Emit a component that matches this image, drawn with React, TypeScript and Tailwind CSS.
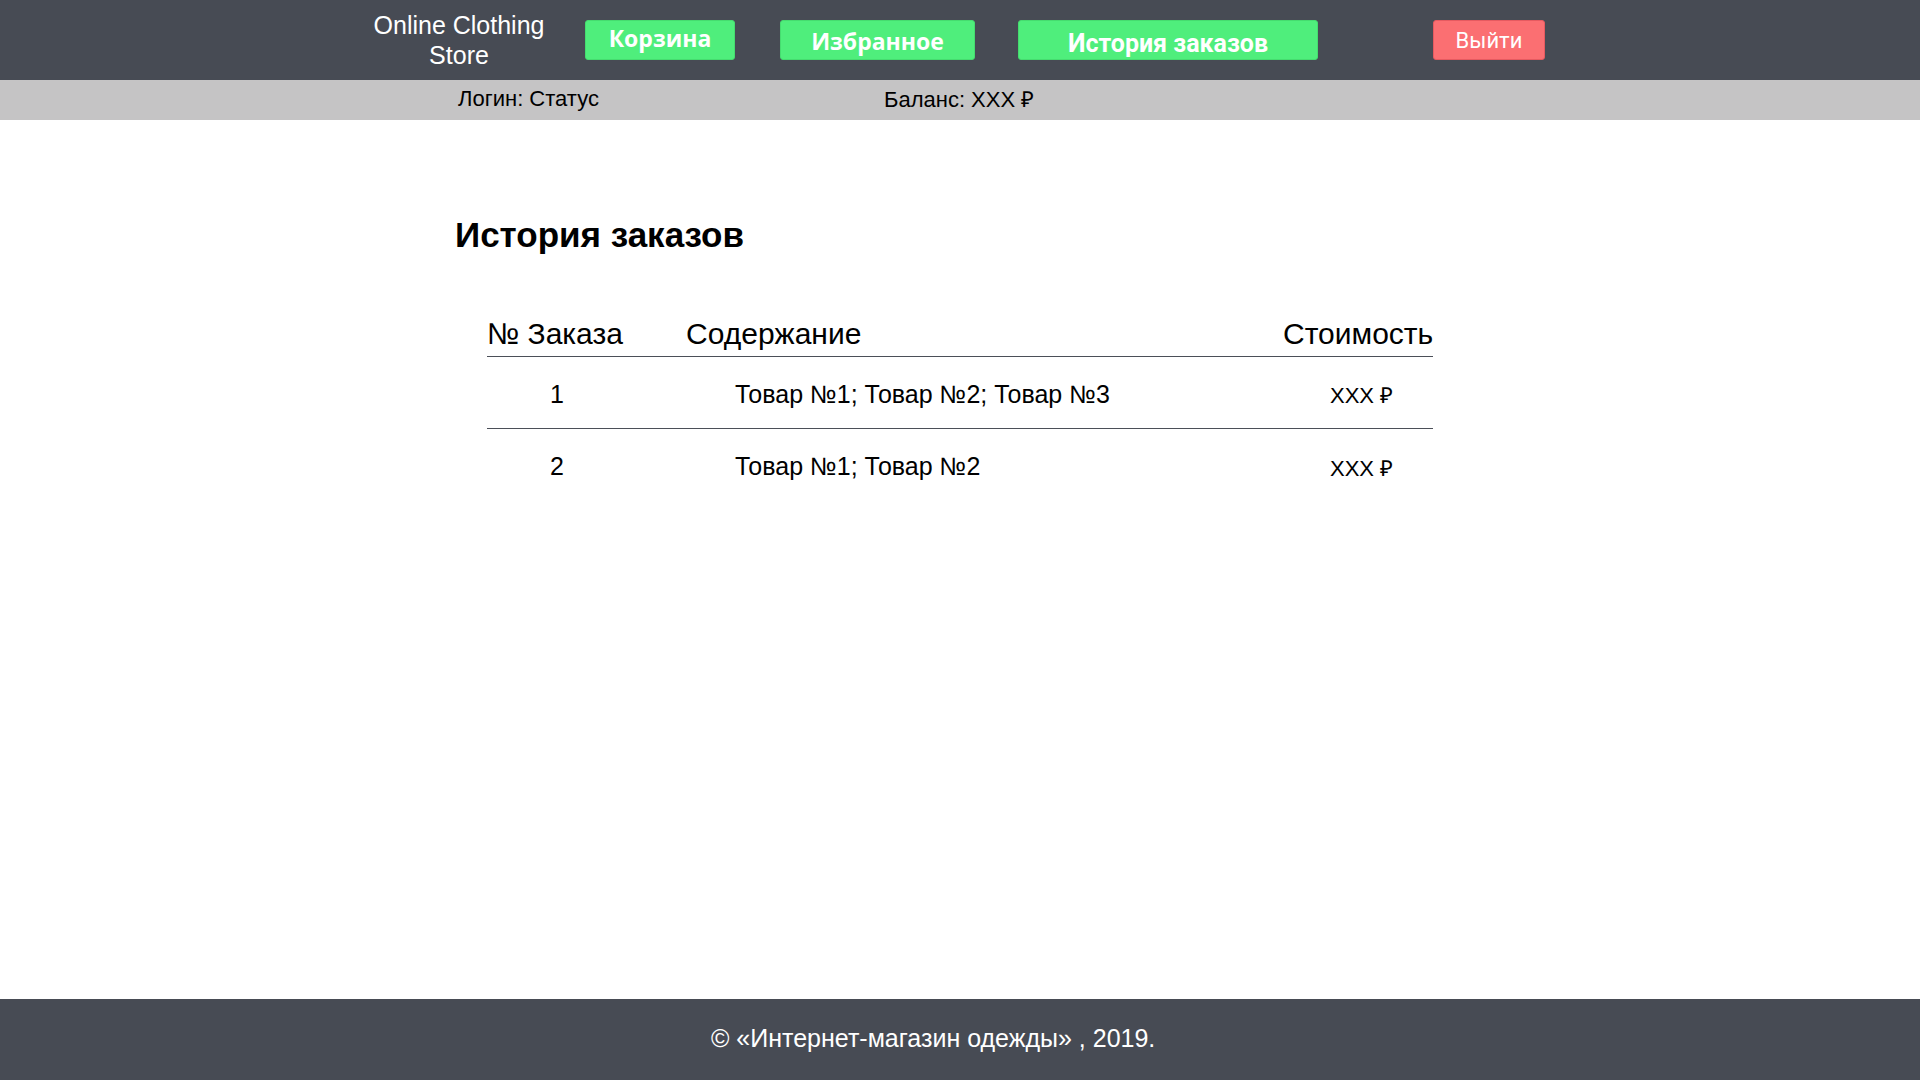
const orders = [
  { id: 1, items: 'Товар №1; Товар №2; Товар №3', price: 'XXX ₽' },
  { id: 2, items: 'Товар №1; Товар №2', price: 'XXX ₽' },
];

function Header() {
  return (
    <header className="bg-[#474b54] h-[80px] flex items-center">
      <div className="ml-[369px] w-[180px] text-center text-white text-[25px] leading-[30px] font-['Liberation_Sans',Arial,sans-serif]">
        Online Clothing
        <br />
        Store
      </div>
      <button className="ml-[36px] w-[150px] h-[40px] rounded-[3px] bg-[#4fee7c] border border-[#45dc6f] text-white text-[23px] font-bold font-['Open_Sans',sans-serif] leading-none pb-[4px]">
        Корзина
      </button>
      <button className="ml-[45px] w-[195px] h-[40px] rounded-[3px] bg-[#4fee7c] border border-[#45dc6f] text-white text-[23px] font-bold font-['Open_Sans',sans-serif] leading-none pt-[3px]">
        Избранное
      </button>
      <button className="ml-[43px] w-[300px] h-[40px] rounded-[3px] bg-[#4fee7c] border border-[#45dc6f] text-white text-[25px] font-bold font-['Roboto',sans-serif] leading-none pt-[7px]">
        История заказов
      </button>
      <button className="ml-[115px] w-[112px] h-[40px] rounded-[3px] bg-[#fb6f72] border border-[#e65a60] text-white text-[22px] font-['Roboto',sans-serif] leading-none pt-[2px]">
        Выйти
      </button>
    </header>
  );
}

function InfoBar() {
  return (
    <div className="bg-[#c5c4c5] h-[40px] flex items-center text-black text-[22px] font-['Liberation_Sans',Arial,sans-serif]">
      <span className="ml-[458px] w-[426px] pb-[4px]">Логин: Статус</span>
      <span className="pb-[1px]">Баланс: XXX ₽</span>
    </div>
  );
}

function OrdersTable() {
  return (
    <div className="ml-[487px] w-[946px] font-['Liberation_Sans',Arial,sans-serif] text-black">
      <div className="flex h-[42px] items-center pb-[4px] border-b border-[#4b4f58] text-[30px]">
        <span className="w-[199px]">№ Заказа</span>
        <span className="flex-1">Содержание</span>
        <span className="w-[150px] text-right">Стоимость</span>
      </div>
      {orders.map((o, i) => (
        <div
          key={o.id}
          className={
            'flex h-[72px] items-center pt-[4px] ' +
            (i < orders.length - 1 ? 'border-b border-[#4b4f58]' : '')
          }
        >
          <span className="w-[199px] pl-[63px] text-[25px]">{o.id}</span>
          <span className="flex-1 pl-[49px] text-[25px]">{o.items}</span>
          <span className="w-[150px] pl-[47px] pt-[2px] text-[22px]">{o.price}</span>
        </div>
      ))}
    </div>
  );
}

export default function App() {
  return (
    <div className="h-[1080px] flex flex-col bg-white">
      <Header />
      <InfoBar />
      <main className="flex-1">
        <h1 className="ml-[455px] mt-[95px] h-[40px] text-[35px] leading-[40px] font-bold font-['Liberation_Sans',Arial,sans-serif] text-black">
          История заказов
        </h1>
        <div className="mt-[60px]">
          <OrdersTable />
        </div>
      </main>
      <footer className="bg-[#474b54] h-[81px] flex items-center text-white text-[25px] font-['Liberation_Sans',Arial,sans-serif]">
        <span className="ml-[711px] pb-[2px]">© «Интернет-магазин одежды» , 2019.</span>
      </footer>
    </div>
  );
}
